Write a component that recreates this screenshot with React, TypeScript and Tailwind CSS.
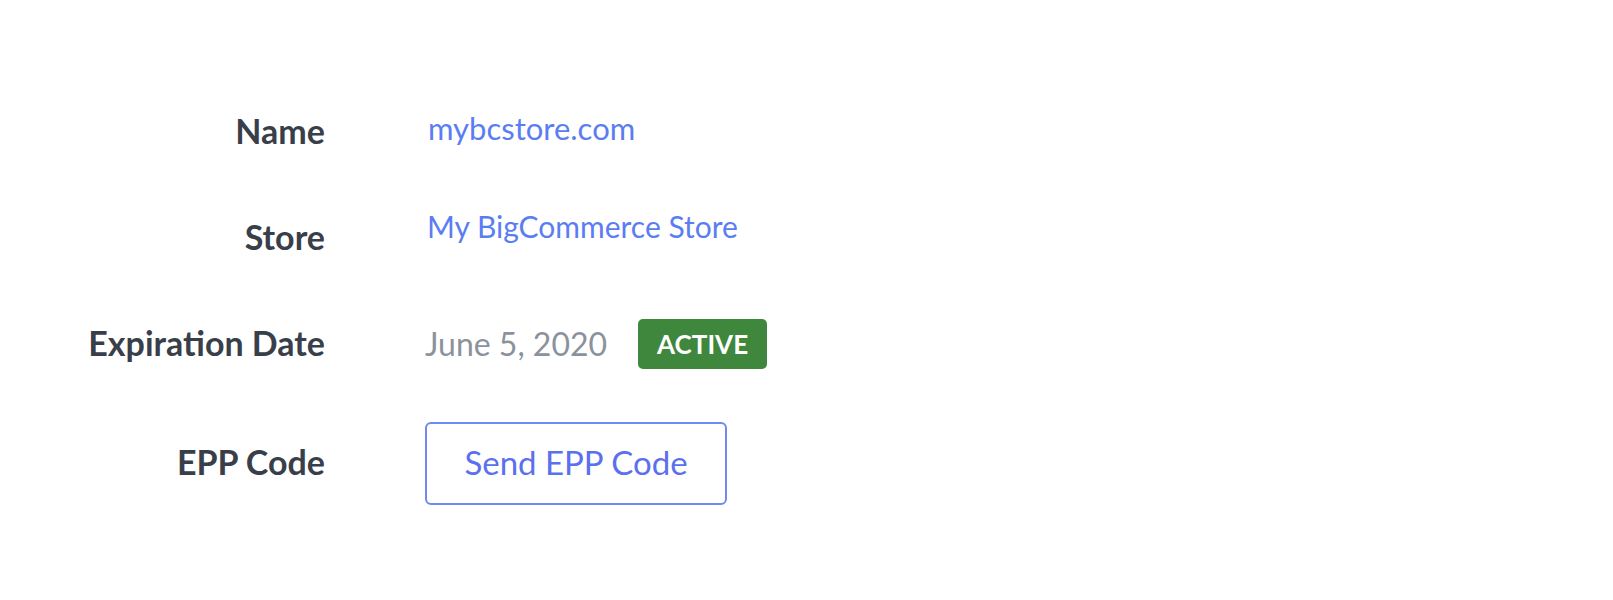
import React from 'react';

const font = { fontFamily: 'Lato, "Open Sans", Arial, sans-serif' };

function Row({ label, children, className = '' }: { label: string; children: React.ReactNode; className?: string }) {
    return (
        <div className={`grid grid-cols-[325px_1fr] gap-x-[102px] items-center ${className}`}>
            <div className="text-right text-[34px] font-bold text-[#393f4a] -mt-[4px]">{label}</div>
            <div className="flex items-center">{children}</div>
        </div>
    );
}

export default function App() {
    return (
        <div className="w-[1613px] h-[600px] bg-white overflow-hidden pt-[79px]" style={font}>
            <Row label="Name" className="h-[106px]">
                <a className="text-[31px] text-[#5b7df2] -mt-[8px] ml-[1px]">mybcstore.com</a>
            </Row>
            <Row label="Store" className="h-[106px]">
                <a className="text-[30px] text-[#5b7df2] -mt-[24px]">My BigCommerce Store</a>
            </Row>
            <Row label="Expiration Date" className="h-[106px]">
                <span className="text-[32px] text-[#8b929c] -ml-[2px]">June 5, 2020</span>
                <span className="ml-[31px] inline-flex items-center justify-center w-[129px] h-[50px] rounded-[5px] bg-[#3f873c] text-white text-[26px] font-bold">
                    ACTIVE
                </span>
            </Row>
            <Row label="EPP Code" className="h-[132px]">
                <button className="-ml-[2px] w-[302px] h-[83px] rounded-[6px] border-2 border-[#6f89f4] bg-white text-[33px] text-[#5a70ee]">
                    Send EPP Code
                </button>
            </Row>
        </div>
    );
}
